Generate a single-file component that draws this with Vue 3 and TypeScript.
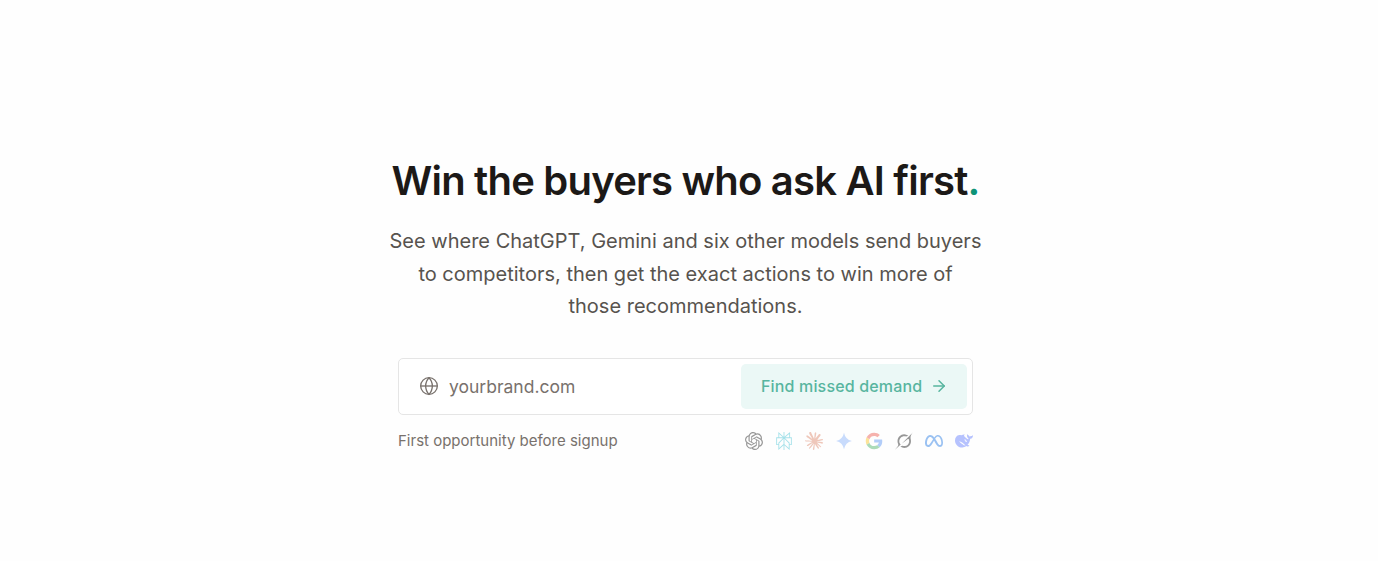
<template>
  <main class="page">
    <section class="hero">
      <h1 class="hero-title">Win the buyers who ask AI first<span class="dot">.</span></h1>
      <p class="hero-subtitle">
        See where ChatGPT, Gemini and six other models send buyers<br>
        to competitors, then get the exact actions to win more of<br>
        those recommendations.
      </p>

      <form class="brand-form" @submit.prevent="submitBrand">
        <svg class="globe" viewBox="0 0 24 24" aria-hidden="true">
          <circle cx="12" cy="12" r="10" />
          <path d="M12 2a14.5 14.5 0 0 0 0 20 14.5 14.5 0 0 0 0-20" />
          <path d="M2 12h20" />
        </svg>
        <input v-model="brand" class="brand-input" type="text" placeholder="yourbrand.com" aria-label="Brand website">
        <button class="submit-btn" type="submit" :disabled="!isValid">
          <span>Find missed demand</span>
          <svg class="arrow" viewBox="0 0 24 24" aria-hidden="true">
            <path d="M5 12h14" />
            <path d="m12 5 7 7-7 7" />
          </svg>
        </button>
      </form>

      <div class="form-footer">
        <span class="note">First opportunity before signup</span>
        <div class="models">
          <svg v-for="model in models" :key="model.name" class="model-icon" viewBox="0 0 24 24" role="img" :aria-label="model.name">
            <path v-for="(shape, i) in model.shapes" :key="i" :fill="shape.fill" fill-rule="evenodd" :d="shape.d" />
          </svg>
        </div>
      </div>
    </section>
  </main>
</template>

<script setup lang="ts">
import { ref, computed } from 'vue'

interface Shape {
  fill: string
  d: string
}

interface Model {
  name: string
  shapes: Shape[]
}

const brand = ref('')

const isValid = computed(() => brand.value.trim().includes('.'))

const submitBrand = () => {
  if (!isValid.value) return
  console.log('Brand submitted:', brand.value.trim())
}

const models: Model[] = [
  {
    name: 'ChatGPT',
    shapes: [
      {
        fill: '#000000',
        d: 'M22.2819 9.8211a5.9847 5.9847 0 0 0-.5157-4.9108 6.0462 6.0462 0 0 0-6.5098-2.9A6.0651 6.0651 0 0 0 4.9807 4.1818a5.9847 5.9847 0 0 0-3.9977 2.9 6.0462 6.0462 0 0 0 .7427 7.0966 5.98 5.98 0 0 0 .511 4.9107 6.051 6.051 0 0 0 6.5146 2.9001A5.9847 5.9847 0 0 0 13.2599 24a6.0557 6.0557 0 0 0 5.7718-4.2058 5.9894 5.9894 0 0 0 3.9977-2.9001 6.0557 6.0557 0 0 0-.7475-7.0729zm-9.022 12.6081a4.4755 4.4755 0 0 1-2.8764-1.0408l.1419-.0804 4.7783-2.7582a.7948.7948 0 0 0 .3927-.6813v-6.7369l2.02 1.1686a.071.071 0 0 1 .038.052v5.5826a4.504 4.504 0 0 1-4.4945 4.4944zm-9.6607-4.1254a4.4708 4.4708 0 0 1-.5346-3.0137l.142.0852 4.783 2.7582a.7712.7712 0 0 0 .7806 0l5.8428-3.3685v2.3324a.0804.0804 0 0 1-.0332.0615L9.74 19.9502a4.4992 4.4992 0 0 1-6.1408-1.6464zM2.3408 7.8956a4.485 4.485 0 0 1 2.3655-1.9728V11.6a.7664.7664 0 0 0 .3879.6765l5.8144 3.3543-2.0201 1.1685a.0757.0757 0 0 1-.071 0l-4.8303-2.7865A4.504 4.504 0 0 1 2.3408 7.872zm16.5963 3.8558L13.1038 8.364 15.1192 7.2a.0757.0757 0 0 1 .071 0l4.8303 2.7913a4.4944 4.4944 0 0 1-.6765 8.1042v-5.6772a.79.79 0 0 0-.407-.667zm2.0107-3.0231l-.142-.0852-4.7735-2.7818a.7759.7759 0 0 0-.7854 0L9.409 9.2297V6.8974a.0662.0662 0 0 1 .0284-.0615l4.8303-2.7866a4.4992 4.4992 0 0 1 6.6802 4.66zM8.3065 12.863l-2.02-1.1638a.0804.0804 0 0 1-.038-.0567V6.0742a4.4992 4.4992 0 0 1 7.3757-3.4537l-.142.0805L8.704 5.459a.7948.7948 0 0 0-.3927.6813zm1.0976-2.3654l2.602-1.4998 2.6069 1.4998v2.9994l-2.5974 1.4997-2.6067-1.4997Z'
      }
    ]
  },
  {
    name: 'Perplexity',
    shapes: [
      {
        fill: '#22B8CD',
        d: 'M22.3977 7.0896h-2.3106V.0676l-7.5094 6.3542V.1577h-1.1554v6.1966L4.4904 0v7.0896H1.6023v10.3976h2.8882V24l6.932-6.3591v6.2005h1.1554v-6.0469l6.9318 6.1807v-6.4879h2.8882V7.0896zm-3.4657-4.531v4.531h-5.355l5.355-4.531zm-13.2862.0676 4.8691 4.4634H5.6458V2.6262zM2.7576 16.332V8.245h7.8476l-6.1149 6.1147v1.9723H2.7576zm2.8882 5.0404v-3.8852h.0001v-2.6488l5.7763-5.7764v7.0111l-5.7764 5.2993zm12.7086.0248-5.7766-5.1509V9.0618l5.7766 5.7766v6.5588zm2.8882-5.0652h-1.733v-1.9723L13.3948 8.245h7.8478v8.087z'
      }
    ]
  },
  {
    name: 'Claude',
    shapes: [
      {
        fill: '#D97757',
        d: 'M4.709 15.955l4.72-2.647.08-.23-.08-.128H9.2l-.79-.048-2.698-.073-2.339-.097-2.266-.122-.571-.121L0 11.784l.055-.352.48-.321.686.06 1.52.103 2.278.158 1.652.097 2.449.255h.389l.055-.157-.134-.098-.103-.097-2.358-1.596-2.552-1.688-1.336-.972-.724-.491-.364-.462-.158-1.008.656-.722.881.06.225.061.893.686 1.908 1.476 2.491 1.833.365.304.145-.103.019-.073-.164-.274-1.355-2.446-1.446-2.49-.644-1.032-.17-.619a2.97 2.97 0 01-.104-.729L6.283.134 6.696 0l.996.134.42.364.62 1.414 1.002 2.229 1.555 3.03.456.898.243.832.091.255h.158V9.01l.128-1.706.237-2.095.23-2.695.08-.76.376-.91.747-.492.584.28.48.685-.067.444-.286 1.851-.559 2.903-.364 1.942h.212l.243-.242.985-1.306 1.652-2.064.73-.82.85-.904.547-.431h1.033l.76 1.129-.34 1.166-1.064 1.347-.881 1.142-1.264 1.7-.79 1.36.073.11.188-.02 2.856-.606 1.543-.28 1.841-.315.833.388.091.395-.328.807-1.969.486-2.309.462-3.439.813-.042.03.049.061 1.549.146.662.036h1.622l3.02.225.79.522.474.638-.079.485-1.215.62-1.64-.389-3.829-.91-1.312-.329h-.182v.11l1.093 1.068 2.006 1.81 2.509 2.33.127.578-.322.455-.34-.049-2.205-1.657-.851-.747-1.926-1.62h-.128v.17l.444.649 2.345 3.521.122 1.08-.17.353-.608.213-.668-.122-1.374-1.925-1.415-2.167-1.143-1.943-.14.08-.674 7.254-.316.37-.729.28-.607-.461-.322-.747.322-1.476.389-1.924.315-1.53.286-1.9.17-.632-.012-.042-.14.018-1.434 1.967-2.18 2.945-1.726 1.845-.414.164-.717-.37.067-.662.401-.589 2.388-3.036 1.44-1.882.93-1.086-.006-.158h-.055L4.132 18.56l-1.13.146-.487-.456.061-.746.231-.243 1.908-1.312-.006.006z'
      }
    ]
  },
  {
    name: 'Gemini',
    shapes: [
      {
        fill: '#78A9FA',
        d: 'M12 23A14 14 0 001.5 12 14 14 0 0012 1a14 14 0 0010.5 11A14 14 0 0012 23'
      }
    ]
  },
  {
    name: 'Google',
    shapes: [
      {
        fill: '#4285F4',
        d: 'M23 12.245c0-.905-.075-1.565-.236-2.25h-10.54v4.083h6.186c-.124 1.014-.797 2.542-2.294 3.569l-.021.136 3.332 2.53.23.022C21.779 18.417 23 15.593 23 12.245z'
      },
      {
        fill: '#34A853',
        d: 'M12.225 23c3.03 0 5.574-.978 7.433-2.665l-3.542-2.688c-.948.648-2.22 1.1-3.891 1.1a6.745 6.745 0 01-6.386-4.572l-.132.011-3.465 2.628-.045.124C4.043 20.531 7.835 23 12.225 23z'
      },
      {
        fill: '#FBBC05',
        d: 'M5.84 14.175A6.65 6.65 0 015.463 12c0-.758.138-1.491.361-2.175l-.006-.147-3.508-2.67-.115.054A10.831 10.831 0 001 12c0 1.772.436 3.447 1.197 4.938l3.642-2.763z'
      },
      {
        fill: '#EB4335',
        d: 'M12.225 5.253c2.108 0 3.529.892 4.34 1.638l3.167-3.031C17.787 2.088 15.255 1 12.225 1 7.834 1 4.043 3.469 2.197 7.062l3.63 2.763a6.77 6.77 0 016.398-4.572z'
      }
    ]
  },
  {
    name: 'Grok',
    shapes: [
      {
        fill: '#000000',
        d: 'M9.27 15.29l7.978-5.897c.391-.29.95-.177 1.137.272.98 2.369.542 5.215-1.41 7.169-1.951 1.954-4.667 2.382-7.149 1.406l-2.711 1.257c3.889 2.661 8.611 2.003 11.562-.953 2.341-2.344 3.066-5.539 2.388-8.42l.006.007c-.983-4.232.242-5.924 2.75-9.383.06-.082.12-.164.179-.248l-3.301 3.305v-.01L9.267 15.292M7.623 16.723c-2.792-2.67-2.31-6.801.071-9.184 1.761-1.763 4.647-2.483 7.166-1.425l2.705-1.25a7.808 7.808 0 00-1.829-1A8.975 8.975 0 005.984 5.83c-2.533 2.536-3.33 6.436-1.962 9.764 1.022 2.487-.653 4.246-2.34 6.022-.599.63-1.199 1.259-1.682 1.925l7.62-6.815'
      }
    ]
  },
  {
    name: 'Meta AI',
    shapes: [
      {
        fill: '#0668E1',
        d: 'M6.897 4c1.915 0 3.516.932 5.43 3.376l.282-.373c.19-.246.383-.484.58-.71l.313-.35C14.588 4.788 15.792 4 17.225 4c1.273 0 2.469.557 3.491 1.516l.218.213c1.73 1.765 2.917 4.71 3.053 8.026l.011.392.002.25c0 1.501-.28 2.759-.818 3.7l-.14.23-.108.153c-.301.42-.664.758-1.086 1.009l-.265.142-.087.04a3.493 3.493 0 01-.302.118 4.117 4.117 0 01-1.33.208c-.524 0-.996-.067-1.438-.215-.614-.204-1.163-.56-1.726-1.116l-.227-.235c-.753-.812-1.534-1.976-2.493-3.586l-1.43-2.41-.544-.895-1.766 3.13-.343.592C7.597 19.156 6.227 20 4.356 20c-1.21 0-2.205-.42-2.936-1.182l-.168-.184c-.484-.573-.837-1.311-1.043-2.189l-.067-.32a8.69 8.69 0 01-.136-1.222L0 14.468c.002-.745.06-1.49.174-2.23l.1-.573c.298-1.53.828-2.958 1.536-4.157l.209-.34c1.177-1.83 2.789-3.053 4.615-3.16L6.897 4zm-.033 2.615l-.201.01c-.83.083-1.606.673-2.252 1.577l-.138.199-.01.018c-.67 1.017-1.185 2.378-1.456 3.845l-.004.022a12.591 12.591 0 00-.207 2.254l.002.188c.004.18.017.36.04.54l.043.291c.092.503.257.908.486 1.208l.117.137c.303.323.698.492 1.17.492 1.1 0 1.796-.676 3.696-3.641l2.175-3.4.454-.701-.139-.198C9.11 7.3 8.084 6.616 6.864 6.616zm10.196-.552l-.176.007c-.635.048-1.223.359-1.82.933l-.196.198c-.439.462-.887 1.064-1.367 1.807l.266.398c.18.274.362.56.55.858l.293.475 1.396 2.335.695 1.114c.583.926 1.03 1.6 1.408 2.082l.213.262c.282.326.529.54.777.673l.102.05c.227.1.457.138.718.138.176.002.35-.023.518-.073.338-.104.61-.32.813-.637l.095-.163.077-.162c.194-.459.29-1.06.29-1.785l-.006-.449c-.08-2.871-.938-5.372-2.2-6.798l-.176-.189c-.67-.683-1.444-1.074-2.27-1.074z'
      }
    ]
  },
  {
    name: 'DeepSeek',
    shapes: [
      {
        fill: '#4D6BFE',
        d: 'M23.748 4.482c-.254-.124-.364.113-.512.234-.051.039-.094.09-.137.136-.372.397-.806.657-1.373.626-.829-.046-1.537.214-2.163.848-.133-.782-.575-1.248-1.247-1.548-.352-.156-.708-.311-.955-.65-.172-.241-.219-.51-.305-.774-.055-.16-.11-.323-.293-.35-.2-.031-.278.136-.356.276-.313.572-.434 1.202-.422 1.84.027 1.436.633 2.58 1.838 3.393.137.093.172.187.129.323-.082.28-.18.552-.266.833-.055.179-.137.217-.329.14a5.526 5.526 0 01-1.736-1.18c-.857-.828-1.631-1.742-2.597-2.458a11.365 11.365 0 00-.689-.471c-.985-.957.13-1.743.388-1.836.27-.098.093-.432-.779-.428-.872.004-1.67.295-2.687.684a3.055 3.055 0 01-.465.137 9.597 9.597 0 00-2.883-.102c-1.885.21-3.39 1.102-4.497 2.623C.082 8.606-.231 10.684.152 12.85c.403 2.284 1.569 4.175 3.36 5.653 1.858 1.533 3.997 2.284 6.438 2.14 1.482-.085 3.133-.284 4.994-1.86.47.234.962.327 1.78.397.63.059 1.236-.03 1.705-.128.735-.156.684-.837.419-.961-2.155-1.004-1.682-.595-2.113-.926 1.096-1.296 2.746-2.642 3.392-7.003.05-.347.007-.565 0-.845-.004-.17.035-.237.23-.256a4.173 4.173 0 001.545-.475c1.396-.763 1.96-2.015 2.093-3.517.02-.23-.004-.467-.247-.588zM11.8 17.6C9.6 15.8 7.4 15 5.4 12.4c2.8.2 5.4 2.6 8.6 5.6zm.781-6.04a.306.306 0 01.415-.287.302.302 0 01.2.288.306.306 0 01-.31.307.303.303 0 01-.304-.308zm3.11 1.596c-.2.081-.399.151-.59.16a1.245 1.245 0 01-.798-.254c-.274-.23-.47-.358-.552-.758a1.73 1.73 0 01.016-.588c.07-.327-.008-.537-.239-.727-.187-.156-.426-.199-.688-.199a.559.559 0 01-.254-.078c-.11-.054-.2-.19-.114-.358.028-.054.16-.186.192-.21.356-.202.767-.136 1.146.016.352.144.618.408 1.001.782.391.451.462.576.685.914.176.265.336.537.445.848.067.195-.019.354-.25.452z'
      }
    ]
  }
]
</script>

<style>
body {
  background: #fefefe;
}
</style>

<style scoped>
.page {
  box-sizing: border-box;
  min-height: 561px;
  padding: 158px 7px 0 0;
  font-family: Inter, "Liberation Sans", sans-serif;
}

.hero {
  display: flex;
  flex-direction: column;
  align-items: center;
}

.hero-title {
  margin: 0;
  color: #1c1917;
  font-size: 40px;
  font-weight: 600;
  line-height: 46px;
  letter-spacing: -0.8px;
  white-space: nowrap;
}

.dot {
  color: #0d9478;
}

.hero-subtitle {
  width: 600px;
  margin: 21px 0 0;
  color: #57534e;
  font-size: 20px;
  line-height: 32.5px;
  text-align: center;
}

.brand-form {
  display: flex;
  align-items: center;
  box-sizing: border-box;
  width: 575px;
  height: 57px;
  margin-top: 35px;
  padding: 0 5px 0 20px;
  border: 1px solid #e5e5e5;
  border-radius: 5px;
  background: #fff;
}

.globe {
  flex: none;
  width: 20px;
  height: 20px;
  fill: none;
  stroke: #78716c;
  stroke-width: 1.6;
}

.brand-input {
  flex: 1;
  min-width: 0;
  padding: 0 0 0 10px;
  border: none;
  outline: none;
  background: none;
  color: #1c1917;
  font-family: inherit;
  font-size: 17.5px;
}

.brand-input::placeholder {
  color: #78716c;
  opacity: 1;
}

.submit-btn {
  display: flex;
  align-items: center;
  justify-content: space-between;
  box-sizing: border-box;
  width: 226px;
  height: 45px;
  padding: 0 19.5px 0 20px;
  border: none;
  border-radius: 5px;
  background: #0d9478;
  color: #fff;
  font-family: inherit;
  font-size: 16px;
  font-weight: 500;
  letter-spacing: 0.16px;
  cursor: pointer;
}

.submit-btn:disabled {
  background: #ebf8f6;
  color: #57b59f;
  cursor: default;
}

.arrow {
  width: 18px;
  height: 18px;
  fill: none;
  stroke: currentColor;
  stroke-width: 2;
  stroke-linecap: round;
  stroke-linejoin: round;
}

.form-footer {
  display: flex;
  align-items: center;
  justify-content: space-between;
  width: 575px;
  margin-top: 15px;
}

.note {
  color: #78716c;
  font-size: 15px;
  line-height: 22px;
}

.models {
  display: flex;
  gap: 12px;
  margin-right: -0.4px;
}

.model-icon {
  width: 18px;
  height: 18px;
  opacity: 0.4;
}
</style>
